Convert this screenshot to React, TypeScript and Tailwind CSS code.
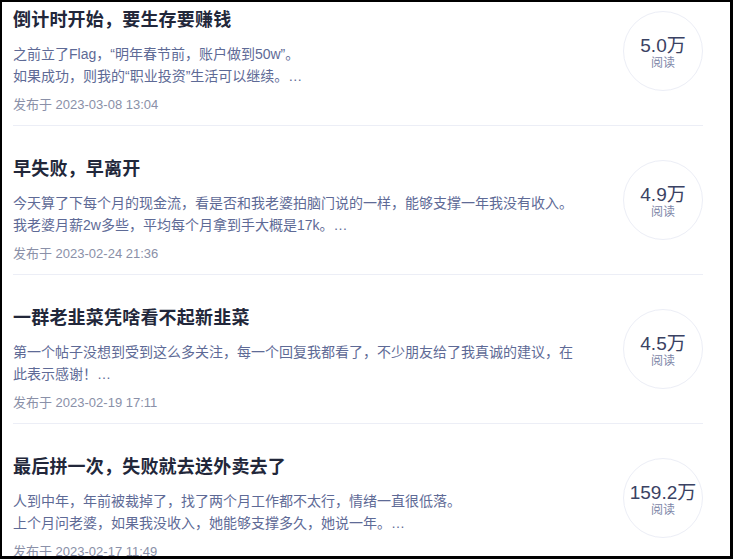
import React from "react";

type Post = {
  title: string;
  lines: string[];
  date: string;
  reads: string;
};

const posts: Post[] = [
  {
    title: "倒计时开始，要生存要赚钱",
    lines: ["之前立了Flag，“明年春节前，账户做到50w”。", "如果成功，则我的“职业投资”生活可以继续。…"],
    date: "发布于 2023-03-08 13:04",
    reads: "5.0万",
  },
  {
    title: "早失败，早离开",
    lines: [
      "今天算了下每个月的现金流，看是否和我老婆拍脑门说的一样，能够支撑一年我没有收入。",
      "我老婆月薪2w多些，平均每个月拿到手大概是17k。…",
    ],
    date: "发布于 2023-02-24 21:36",
    reads: "4.9万",
  },
  {
    title: "一群老韭菜凭啥看不起新韭菜",
    lines: ["第一个帖子没想到受到这么多关注，每一个回复我都看了，不少朋友给了我真诚的建议，在此表示感谢！…"],
    date: "发布于 2023-02-19 17:11",
    reads: "4.5万",
  },
  {
    title: "最后拼一次，失败就去送外卖去了",
    lines: ["人到中年，年前被裁掉了，找了两个月工作都不太行，情绪一直很低落。", "上个月问老婆，如果我没收入，她能够支撑多久，她说一年。…"],
    date: "发布于 2023-02-17 11:49",
    reads: "159.2万",
  },
];

const font = {
  fontFamily: '"Liberation Sans", "Noto Sans CJK SC", sans-serif',
};

export default function App() {
  return (
    <div className="w-[733px] h-[559px] bg-black pt-[2px] pl-[2px] pr-[3px] pb-[3px]" style={font}>
      <div className="w-full h-full bg-white overflow-hidden pl-[11px] pr-[27px]">
        <div className="-mt-[25px]">
          {posts.map((p, i) => (
            <div key={i} className="flex items-center border-b border-[#eceef6]">
              <div className="flex-1 pt-[30px] pb-[11px]">
                <div className="text-[18px] leading-[26px] font-semibold text-[#22273a] tracking-[0.2px]">
                  {p.title}
                </div>
                <div className="mt-[10px] w-[568px] text-[14px] leading-[22px] text-[#5e6a96]">
                  {p.lines.map((l, j) => (
                    <div key={j}>{l}</div>
                  ))}
                </div>
                <div className="mt-[9px] text-[13px] leading-[18px] text-[#8a90a8]">{p.date}</div>
              </div>
              <div className="w-[80px] h-[80px] shrink-0 rounded-full border border-[#eceef6] flex flex-col items-center justify-center pt-[4px]">
                <div className="text-[19px] leading-[21px] text-[#3a4263]">{p.reads}</div>
                <div className="text-[12px] leading-[15px] text-[#7d86a8]">阅读</div>
              </div>
            </div>
          ))}
        </div>
      </div>
    </div>
  );
}
